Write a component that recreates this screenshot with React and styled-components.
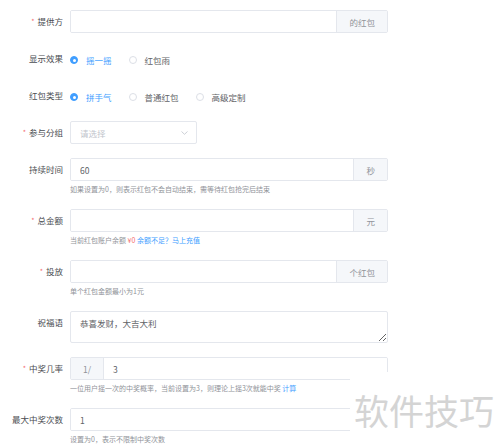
import React from 'react';
import styled, { createGlobalStyle } from 'styled-components';

const GlobalStyle = createGlobalStyle`
  html, body {
    margin: 0;
    padding: 0;
    background: #fff;
    overflow: hidden;
  }
  body {
    font-family: "Noto Sans CJK SC", "Liberation Sans", sans-serif;
  }
`;

function App() {
  return (
    <Page>
      <GlobalStyle />
      <Form>
        <FormItem>
          <Label required>提供方</Label>
          <Field>
            <InputGroup>
              <TextInput readOnly defaultValue="" />
              <Addon>的红包</Addon>
            </InputGroup>
          </Field>
        </FormItem>

        <FormItem>
          <Label>显示效果</Label>
          <Field>
            <RadioGroup>
              <RadioOption checked>
                <RadioDot checked />
                摇一摇
              </RadioOption>
              <RadioOption>
                <RadioDot />
                红包雨
              </RadioOption>
            </RadioGroup>
          </Field>
        </FormItem>

        <FormItem>
          <Label>红包类型</Label>
          <Field>
            <RadioGroup>
              <RadioOption checked>
                <RadioDot checked />
                拼手气
              </RadioOption>
              <RadioOption>
                <RadioDot />
                普通红包
              </RadioOption>
              <RadioOption>
                <RadioDot />
                高级定制
              </RadioOption>
            </RadioGroup>
          </Field>
        </FormItem>

        <FormItem>
          <Label required>参与分组</Label>
          <Field>
            <Select>
              <Placeholder>请选择</Placeholder>
              <svg width="7" height="4" viewBox="0 0 7 4" fill="none">
                <path d="M0.5 0.5 L3.5 3.3 L6.5 0.5" stroke="#c0c4cc" strokeWidth="0.8" />
              </svg>
            </Select>
          </Field>
        </FormItem>

        <FormItem>
          <Label>持续时间</Label>
          <Field>
            <InputGroup>
              <TextInput readOnly defaultValue="60" />
              <Addon>秒</Addon>
            </InputGroup>
            <Hint>如果设置为0，则表示红包不会自动结束，需等待红包抢完后结束</Hint>
          </Field>
        </FormItem>

        <FormItem>
          <Label required>总金额</Label>
          <Field>
            <InputGroup>
              <TextInput readOnly defaultValue="" />
              <Addon>元</Addon>
            </InputGroup>
            <Hint>
              当前红包账户余额 <Money>¥0</Money> <Link>余额不足？马上充值</Link>
            </Hint>
          </Field>
        </FormItem>

        <FormItem>
          <Label required>投放</Label>
          <Field>
            <InputGroup>
              <TextInput readOnly defaultValue="" />
              <Addon>个红包</Addon>
            </InputGroup>
            <Hint>单个红包金额最小为1元</Hint>
          </Field>
        </FormItem>

        <FormItem>
          <Label>祝福语</Label>
          <Field>
            <TextArea readOnly defaultValue="恭喜发财，大吉大利" />
          </Field>
        </FormItem>

        <FormItem>
          <Label required>中奖几率</Label>
          <Field>
            <InputGroup>
              <Addon prepend>1/</Addon>
              <TextInput readOnly defaultValue="3" />
            </InputGroup>
            <Hint>
              一位用户摇一次的中奖概率，当前设置为3，则理论上摇3次就能中奖 <Link>计算</Link>
            </Hint>
          </Field>
        </FormItem>

        <FormItem>
          <Label>最大中奖次数</Label>
          <Field>
            <InputGroup>
              <TextInput readOnly defaultValue="1" />
            </InputGroup>
            <Hint>设置为0，表示不限制中奖次数</Hint>
          </Field>
        </FormItem>
      </Form>

      <Watermark>软件技巧</Watermark>
    </Page>
  );
}

const Page = styled.div`
  position: relative;
  width: 500px;
  height: 446px;
  overflow: hidden;
  background: #fff;
`;

const Form = styled.div`
  display: flex;
  flex-direction: column;
  gap: 14px;
  padding-top: 10px;
`;

const FormItem = styled.div`
  display: flex;
  align-items: flex-start;
`;

const Label = styled.div`
  width: 70px;
  flex-shrink: 0;
  box-sizing: border-box;
  padding-right: 7px;
  text-align: right;
  height: 23px;
  line-height: 23px;
  font-size: 8.5px;
  color: #4a4d52;
  white-space: nowrap;

  &::before {
    content: ${(p) => (p.required ? '"*"' : 'none')};
    color: #f56c6c;
    font-size: 7px;
    margin-right: 3px;
    vertical-align: 1px;
  }
`;

const Field = styled.div`
  display: flex;
  flex-direction: column;
  width: 318px;
`;

const InputGroup = styled.div`
  display: flex;
  height: 23px;
  box-sizing: border-box;
  border: 1px solid #e4e7ed;
  border-radius: 2px;
  overflow: hidden;
`;

const TextInput = styled.input`
  flex: 1;
  min-width: 0;
  border: none;
  outline: none;
  padding: 0 9px;
  font-family: "Noto Sans CJK SC", "Liberation Sans", sans-serif;
  font-size: 8.5px;
  color: #606266;
  background: #fff;
`;

const Addon = styled.div`
  flex-shrink: 0;
  display: flex;
  align-items: center;
  justify-content: center;
  padding: 0 12px;
  min-width: 8px;
  background: #f5f7fa;
  color: #909399;
  font-size: 8.5px;
  border-left: ${(p) => (p.prepend ? 'none' : '1px solid #e4e7ed')};
  border-right: ${(p) => (p.prepend ? '1px solid #e4e7ed' : 'none')};
`;

const RadioGroup = styled.div`
  display: flex;
  align-items: center;
  height: 23px;
  box-sizing: border-box;
  padding-top: 3px;
`;

const RadioOption = styled.div`
  display: flex;
  align-items: center;
  gap: 8px;
  margin-right: 17px;
  font-size: 8.5px;
  color: ${(p) => (p.checked ? '#409eff' : '#606266')};
`;

const RadioDot = styled.span`
  width: 8px;
  height: 8px;
  box-sizing: border-box;
  border-radius: 50%;
  border: 1px solid ${(p) => (p.checked ? '#409eff' : '#dcdfe6')};
  background: ${(p) => (p.checked ? '#409eff' : '#fff')};
  display: flex;
  align-items: center;
  justify-content: center;

  &::after {
    content: '';
    width: 3px;
    height: 3px;
    border-radius: 50%;
    background: #fff;
    display: ${(p) => (p.checked ? 'block' : 'none')};
  }
`;

const Select = styled.div`
  width: 127px;
  height: 23px;
  box-sizing: border-box;
  border: 1px solid #e4e7ed;
  border-radius: 2px;
  display: flex;
  align-items: center;
  justify-content: space-between;
  padding: 0 8px 0 9px;
`;

const Placeholder = styled.span`
  font-size: 8.5px;
  color: #c0c4cc;
`;

const Hint = styled.div`
  padding-top: 2px;
  line-height: 12px;
  font-size: 7px;
  color: #909399;
  white-space: nowrap;
`;

const Money = styled.span`
  color: #f56c6c;
`;

const Link = styled.span`
  color: #409eff;
`;

const TextArea = styled.textarea`
  width: 318px;
  height: 32px;
  box-sizing: border-box;
  border: 1px solid #e4e7ed;
  border-radius: 2px;
  padding: 4px 9px;
  font-family: "Noto Sans CJK SC", "Liberation Sans", sans-serif;
  font-size: 8.5px;
  line-height: 14px;
  color: #606266;
  resize: vertical;
  outline: none;
`;

const Watermark = styled.div`
  position: absolute;
  left: 350px;
  top: 372px;
  right: 0;
  bottom: 0;
  background: #fff;
  display: flex;
  align-items: center;
  padding-left: 4px;
  font-size: 35px;
  letter-spacing: 0;
  color: #d4d4d4;
  font-family: "Noto Sans CJK SC", sans-serif;
`;

export default App;
